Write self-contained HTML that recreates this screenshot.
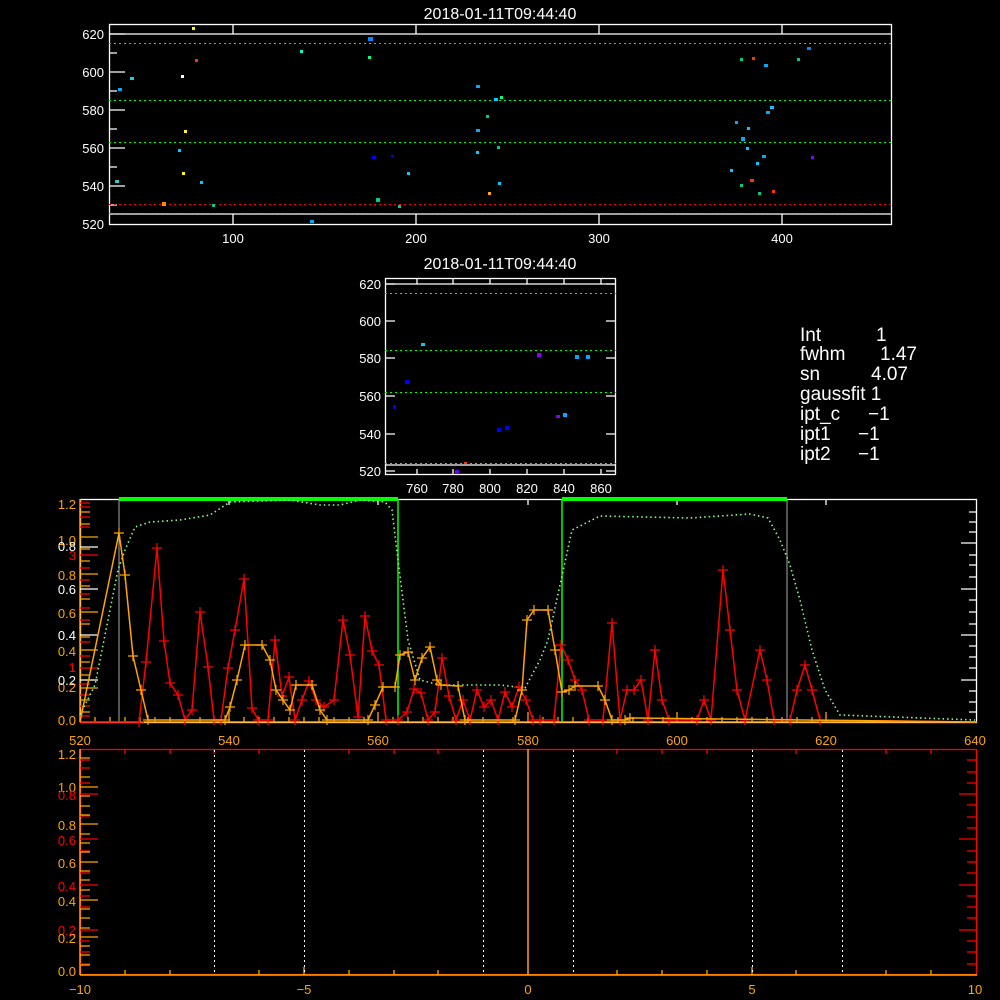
<!DOCTYPE html>
<html><head><meta charset="utf-8"><style>
html,body{margin:0;padding:0;background:#000;width:1000px;height:1000px;overflow:hidden}
svg{display:block}
text{font-family:"Liberation Sans",sans-serif}
</style></head><body>
<svg width="1000" height="1000" viewBox="0 0 1000 1000" xmlns="http://www.w3.org/2000/svg">
<defs>
<marker id="pr" viewBox="-6 -6 12 12" markerWidth="12" markerHeight="12" refX="0" refY="0" markerUnits="userSpaceOnUse"><path d="M-5 0H5M0 -5V5" stroke="#f00" stroke-width="1.2"/></marker>
<marker id="po" viewBox="-6 -6 12 12" markerWidth="12" markerHeight="12" refX="0" refY="0" markerUnits="userSpaceOnUse"><path d="M-5 0H5M0 -5V5" stroke="#ffa500" stroke-width="1.2"/></marker>
</defs>
<rect width="1000" height="1000" fill="#000"/>

<!-- TOP PLOT -->
<text x="500" y="19" fill="#fff" font-size="16" text-anchor="middle">2018-01-11T09:44:40</text>
<rect x="109.5" y="24.5" width="782" height="200" fill="none" stroke="#fff" stroke-width="1.3"/>
<g stroke="#fff" stroke-width="1.3">
<path d="M109 34H892M109 214H892"/>
<path d="M109 34h16M109 72h16M109 110h16M109 148h16M109 186h16M109 53h8M109 91h8M109 129h8M109 167h8M109 205h8"/>
<path d="M233 224v-10M416 224v-10M599 224v-10M782 224v-10M233 24v10M416 24v10M599 24v10M782 24v10"/>
</g>
<g stroke-dasharray="2 3" stroke-width="1" shape-rendering="crispEdges">
<path d="M109 43.5H892M109 100.5H892M109 142.5H892M109 213.5H892" stroke="#0f0"/>
<path d="M109 204.5H892" stroke="#f00"/>
</g>
<g fill="#fff" font-size="13" text-anchor="end">
<text x="104" y="39">620</text><text x="104" y="77">600</text><text x="104" y="115">580</text><text x="104" y="153">560</text><text x="104" y="191">540</text><text x="104" y="229">520</text>
</g>
<g fill="#fff" font-size="13" text-anchor="middle">
<text x="233" y="243">100</text><text x="416" y="243">200</text><text x="599" y="243">300</text><text x="782" y="243">400</text>
</g>
<g>
<rect x="118" y="88" width="4" height="3" fill="#0af"/><rect x="130" y="77" width="4" height="3" fill="#2cd"/>
<rect x="115" y="180" width="4" height="3" fill="#3cc"/><rect x="192" y="27" width="3" height="3" fill="#ff0"/>
<rect x="195" y="59" width="3" height="3" fill="#f30"/><rect x="181" y="75" width="3" height="3" fill="#fff"/>
<rect x="184" y="130" width="3" height="3" fill="#ff0"/><rect x="178" y="149" width="3" height="3" fill="#0cf"/>
<rect x="182" y="172" width="3" height="3" fill="#ff0"/><rect x="200" y="181" width="3" height="3" fill="#0cf"/>
<rect x="162" y="202" width="4" height="4" fill="#f80"/><rect x="212" y="204" width="3" height="3" fill="#0c8"/>
<rect x="300" y="50" width="3" height="3" fill="#0fc"/><rect x="368" y="37" width="5" height="4" fill="#08f"/>
<rect x="368" y="56" width="3" height="3" fill="#0f8"/><rect x="372" y="156" width="4" height="3" fill="#00f"/>
<rect x="391" y="155" width="3" height="2" fill="#00f"/><rect x="407" y="172" width="3" height="3" fill="#0cf"/>
<rect x="376" y="198" width="4" height="4" fill="#0c8"/><rect x="398" y="205" width="3" height="3" fill="#0c8"/>
<rect x="476" y="85" width="4" height="3" fill="#0af"/><rect x="476" y="129" width="4" height="3" fill="#0af"/>
<rect x="476" y="151" width="3" height="3" fill="#0cf"/><rect x="486" y="115" width="3" height="3" fill="#0c8"/>
<rect x="494" y="98" width="4" height="3" fill="#0cf"/><rect x="500" y="96" width="3" height="3" fill="#0f8"/>
<rect x="497" y="146" width="3" height="3" fill="#0c8"/><rect x="498" y="182" width="3" height="3" fill="#0cf"/>
<rect x="488" y="192" width="3" height="3" fill="#fa0"/><rect x="310" y="220" width="4" height="3" fill="#0af"/>
<rect x="740" y="58" width="3" height="3" fill="#0c8"/><rect x="752" y="57" width="3" height="3" fill="#f30"/>
<rect x="764" y="64" width="4" height="3" fill="#0af"/><rect x="797" y="58" width="3" height="3" fill="#0c8"/>
<rect x="807" y="47" width="4" height="3" fill="#08f"/><rect x="770" y="106" width="4" height="3" fill="#0cf"/>
<rect x="766" y="111" width="4" height="3" fill="#0af"/><rect x="735" y="121" width="3" height="3" fill="#0af"/>
<rect x="741" y="137" width="4" height="4" fill="#0af"/><rect x="747" y="127" width="3" height="3" fill="#0cf"/>
<rect x="746" y="147" width="3" height="3" fill="#0cf"/><rect x="756" y="162" width="3" height="3" fill="#0cf"/>
<rect x="762" y="155" width="4" height="3" fill="#0af"/><rect x="730" y="169" width="3" height="3" fill="#0cf"/>
<rect x="740" y="184" width="3" height="3" fill="#0c8"/><rect x="750" y="179" width="4" height="3" fill="#f30"/>
<rect x="758" y="192" width="3" height="3" fill="#0c8"/><rect x="772" y="190" width="3" height="3" fill="#f30"/>
<rect x="811" y="156" width="3" height="3" fill="#80f"/>
</g>

<!-- MIDDLE PLOT -->
<text x="500" y="269" fill="#fff" font-size="16" text-anchor="middle">2018-01-11T09:44:40</text>
<rect x="385.5" y="278.5" width="230" height="196" fill="none" stroke="#fff" stroke-width="1.3"/>
<g stroke="#fff" stroke-width="1.3">
<path d="M385 284H616M385 465H616"/>
<path d="M385 284h10M385 321h10M385 358h10M385 396h10M385 434h10M385 471h10M616 284h-10M616 321h-10M616 358h-10M616 396h-10M616 434h-10M616 471h-10"/>
<path d="M417 475v-6M453 475v-6M490 475v-6M527 475v-6M564 475v-6M601 475v-6M417 278v6M453 278v6M490 278v6M527 278v6M564 278v6M601 278v6"/>
</g>
<g stroke-dasharray="2 3" stroke-width="1" stroke="#0f0" shape-rendering="crispEdges"><path d="M385 293.5H616M385 350.5H616M385 392.5H616M385 463.5H616"/></g>
<g fill="#fff" font-size="13" text-anchor="end">
<text x="381" y="289">620</text><text x="381" y="326">600</text><text x="381" y="363">580</text><text x="381" y="401">560</text><text x="381" y="439">540</text><text x="381" y="476">520</text>
</g>
<g fill="#fff" font-size="13" text-anchor="middle">
<text x="417" y="493">760</text><text x="453" y="493">780</text><text x="490" y="493">800</text><text x="527" y="493">820</text><text x="564" y="493">840</text><text x="601" y="493">860</text>
</g>
<g>
<rect x="393" y="405" width="3" height="4" fill="#00f"/><rect x="405" y="380" width="4" height="4" fill="#00f"/>
<rect x="421" y="343" width="4" height="3" fill="#0cf"/><rect x="497" y="428" width="4" height="4" fill="#00f"/>
<rect x="505" y="426" width="4" height="4" fill="#00f"/><rect x="537" y="353" width="4" height="4" fill="#80f"/>
<rect x="556" y="415" width="4" height="3" fill="#80f"/><rect x="563" y="413" width="4" height="4" fill="#0af"/>
<rect x="575" y="355" width="4" height="4" fill="#0af"/><rect x="586" y="355" width="4" height="4" fill="#0af"/>
<rect x="455" y="470" width="4" height="4" fill="#60f"/><rect x="464" y="462" width="3" height="2" fill="#f30"/>
</g>
<g fill="#fff" font-size="19">
<text x="800" y="341">Int</text><text x="876" y="341">1</text>
<text x="800" y="360">fwhm</text><text x="880" y="360">1.47</text>
<text x="800" y="380">sn</text><text x="871" y="380">4.07</text>
<text x="800" y="400">gaussfit 1</text>
<text x="800" y="420">ipt_c</text><text x="868" y="420">−1</text>
<text x="800" y="440">ipt1</text><text x="858" y="440">−1</text>
<text x="800" y="460">ipt2</text><text x="858" y="460">−1</text>
</g>

<!-- PLOT 3 -->
<rect x="80.5" y="499.5" width="896" height="223" fill="none" stroke="#fff" stroke-width="1.3"/>
<path d="M80 722H977" stroke="#ffa500" stroke-width="1.5"/>
<path d="M80 499V722" stroke="#ffa500" stroke-width="1.5"/>
<g stroke="#fff" stroke-width="1.3">
<path d="M977 512h-8M977 522h-8M977 532h-8M977 543h-16M977 555h-8M977 565h-8M977 577h-8M977 589h-16M977 600h-8M977 612h-8M977 624h-8M977 635h-16M977 646h-8M977 657h-8M977 668h-8M977 680h-16M977 691h-8M977 702h-8M977 712h-8"/>
<path d="M80 547h18M80 589h18M80 635h18M80 680h18"/>
<path d="M229 499v6M378 499v6M528 499v6M677 499v6M826 499v6"/>
</g>
<g stroke="#ffa500" stroke-width="1.3">
<path d="M80 537h18M80 574h18M80 612h18M80 650h18M80 688h18M80 512h10M80 524h10M80 549h10M80 561h10M80 586h10M80 599h10M80 624h10M80 637h10M80 662h10M80 675h10M80 700h10M80 712h10"/>
<path d="M229 722v-10M378 722v-10M528 722v-10M677 722v-10M826 722v-10M95 722v-5M110 722v-5M125 722v-5M140 722v-5M155 722v-5M170 722v-5M185 722v-5M200 722v-5M214 722v-5M244 722v-5M259 722v-5M274 722v-5M289 722v-5M304 722v-5M319 722v-5M334 722v-5M349 722v-5M364 722v-5M393 722v-5M408 722v-5M423 722v-5M438 722v-5M453 722v-5M468 722v-5M483 722v-5M498 722v-5M513 722v-5M543 722v-5M558 722v-5M573 722v-5M588 722v-5M603 722v-5M618 722v-5M633 722v-5M648 722v-5M663 722v-5M692 722v-5M707 722v-5M722 722v-5M737 722v-5M752 722v-5M767 722v-5M782 722v-5M797 722v-5M812 722v-5"/>
</g>
<g stroke="#f00" stroke-width="1.3">
<path d="M80 503h10M80 507h10M80 517h10M80 527h10M80 555h18M80 568h10M80 580h10M80 594h10M80 608h10M80 620h10M80 642h10M80 656h10M80 668h18M80 684h10M80 695h10M80 706h10M80 716h10"/>
</g>
<g font-size="13" text-anchor="end">
<text x="76" y="509" fill="#ffa500">1.2</text>
<text x="76" y="545" fill="#ffa500">1.0</text>
<text x="76" y="551" fill="#fff">0.8</text>
<text x="76" y="560" fill="#f00">3</text>
<text x="76" y="580" fill="#ffa500">0.8</text>
<text x="76" y="594" fill="#fff">0.6</text>
<text x="76" y="618" fill="#ffa500">0.6</text>
<text x="76" y="640" fill="#fff">0.4</text>
<text x="76" y="656" fill="#ffa500">0.4</text>
<text x="76" y="672" fill="#f00">1</text>
<text x="76" y="685" fill="#fff">0.2</text>
<text x="76" y="692" fill="#ffa500">0.2</text>
<text x="76" y="725" fill="#ffa500">0.0</text>
</g>
<g fill="#ffa500" font-size="13" text-anchor="middle">
<text x="80" y="745">520</text><text x="229" y="745">540</text><text x="378" y="745">560</text><text x="528" y="745">580</text><text x="677" y="745">600</text><text x="826" y="745">620</text><text x="975" y="745">640</text>
</g>
<path d="M119 499V722M787 499V722" stroke="#aaa" stroke-width="1"/>
<path d="M398 499V722M562 499V722" stroke="#0f0" stroke-width="1.5"/>
<path d="M119 499H398M562 499H787" stroke="#0f0" stroke-width="4"/>
<polyline fill="none" stroke="#8f8" stroke-width="1.6" stroke-dasharray="1.5 3" points="80,715 95,685 108,620 118,570 125,550 135,527 150,522 180,520 210,515 230,502 290,500 320,505 340,505 360,500 385,502 392,510 398,560 408,640 420,680 440,685 500,685 525,688 540,660 548,640 560,585 572,530 600,516 690,518 750,514 768,518 780,540 790,565 800,600 812,650 825,690 840,715 975,720"/>
<polyline fill="none" stroke="#f00" stroke-width="1.5" marker-mid="url(#pr)" points="80,722 139,722 146,662 157,548 164,641 170,683 178,695 185,720 192,710 200,612 208,667 214,720 221,720 228,668 235,630 244,579 252,708 258,720 268,720 275,640 282,696 289,677 295,720 302,700 309,681 316,700 324,707 334,700 343,620 350,655 358,717 365,616 372,651 379,665 386,720 398,720 407,712 414,689 421,693 428,720 435,712 442,658 449,696 456,720 463,700 470,720 477,690 484,707 491,700 498,720 505,692 512,707 519,687 526,700 533,720 540,720 554,720 561,645 568,660 575,680 582,690 589,720 603,720 612,623 620,720 627,690 634,690 641,680 648,720 655,650 662,700 669,720 697,720 704,700 711,720 723,570 730,630 737,690 745,720 760,650 767,680 774,720 790,720 797,690 805,665 812,690 820,720 975,722"/>
<polyline fill="none" stroke="#ffa500" stroke-width="1.5" marker-mid="url(#po)" points="80,722 119,533 125,575 133,656 141,690 148,720 225,720 230,707 237,680 245,645 262,645 270,660 276,690 283,700 290,710 296,685 312,685 320,710 327,720 368,720 375,705 383,687 395,687 400,655 408,652 415,680 422,658 430,647 437,680 441,685 458,686 465,720 515,720 522,690 527,620 534,610 548,610 555,650 562,692 569,690 575,686 598,686 605,700 612,720 625,720 630,718 975,722"/>

<!-- PLOT 4 -->
<rect x="80.5" y="749.5" width="896" height="225" fill="none" stroke="#f00" stroke-width="1.3"/>
<path d="M80 975H977M80 749V975" stroke="#ffa500" stroke-width="1.5"/>
<g stroke="#f00" stroke-width="1.3">
<path d="M977 760h-10M977 772h-10M977 783h-10M977 794h-18M977 805h-10M977 817h-10M977 828h-10M977 839h-18M977 851h-10M977 862h-10M977 873h-10M977 885h-18M977 896h-10M977 907h-10M977 918h-10M977 930h-18M977 941h-10M977 952h-10M977 964h-10"/>
<path d="M80 760h10M80 768h10M80 783h10M80 794h18M80 816h10M80 839h18M80 851h10M80 873h10M80 885h18M80 896h10M80 907h10M80 930h18M80 941h10M80 952h10M80 964h10"/>
<path d="M125 749v5M170 749v5M214 749v5M259 749v5M349 749v5M394 749v5M438 749v5M617 749v5M662 749v5M707 749v5M796 749v5M886 749v5M931 749v5"/>
</g>
<g stroke="#ffa500" stroke-width="1.3">
<path d="M80 787h18M80 824h18M80 862h18M80 900h18M80 937h18M80 758h10M80 777h10M80 796h10M80 806h10M80 815h10M80 834h10M80 843h10M80 852h10M80 871h10M80 880h10M80 890h10M80 909h10M80 918h10M80 928h10M80 946h10M80 955h10M80 965h10"/>
<path d="M125 975v-5M170 975v-5M259 975v-5M304 975v-8M349 975v-5M394 975v-5M438 975v-5M617 975v-5M662 975v-5M707 975v-5M752 975v-8M796 975v-5M886 975v-5M931 975v-5"/>
</g>
<g stroke="#fff" stroke-width="1" stroke-dasharray="2 3" shape-rendering="crispEdges"><path d="M214.5 750V975M304.5 750V975M483.5 750V975M573.5 750V975M752.5 750V975M842.5 750V975"/></g>
<path d="M528 749V975" stroke="#ffa500" stroke-width="1.5"/>
<g font-size="13" text-anchor="end">
<text x="76" y="759" fill="#ffa500">1.2</text>
<text x="76" y="792" fill="#ffa500">1.0</text>
<text x="76" y="800" fill="#f00">0.8</text>
<text x="76" y="830" fill="#ffa500">0.8</text>
<text x="76" y="845" fill="#f00">0.6</text>
<text x="76" y="868" fill="#ffa500">0.6</text>
<text x="76" y="891" fill="#f00">0.4</text>
<text x="76" y="906" fill="#ffa500">0.4</text>
<text x="76" y="935" fill="#f00">0.2</text>
<text x="76" y="943" fill="#ffa500">0.2</text>
<text x="76" y="976" fill="#ffa500">0.0</text>
</g>
<g fill="#ffa500" font-size="13" text-anchor="middle">
<text x="80" y="994">−10</text><text x="304" y="994">−5</text><text x="528" y="994">0</text><text x="752" y="994">5</text><text x="975" y="994">10</text>
</g>
</svg>
</body></html>
